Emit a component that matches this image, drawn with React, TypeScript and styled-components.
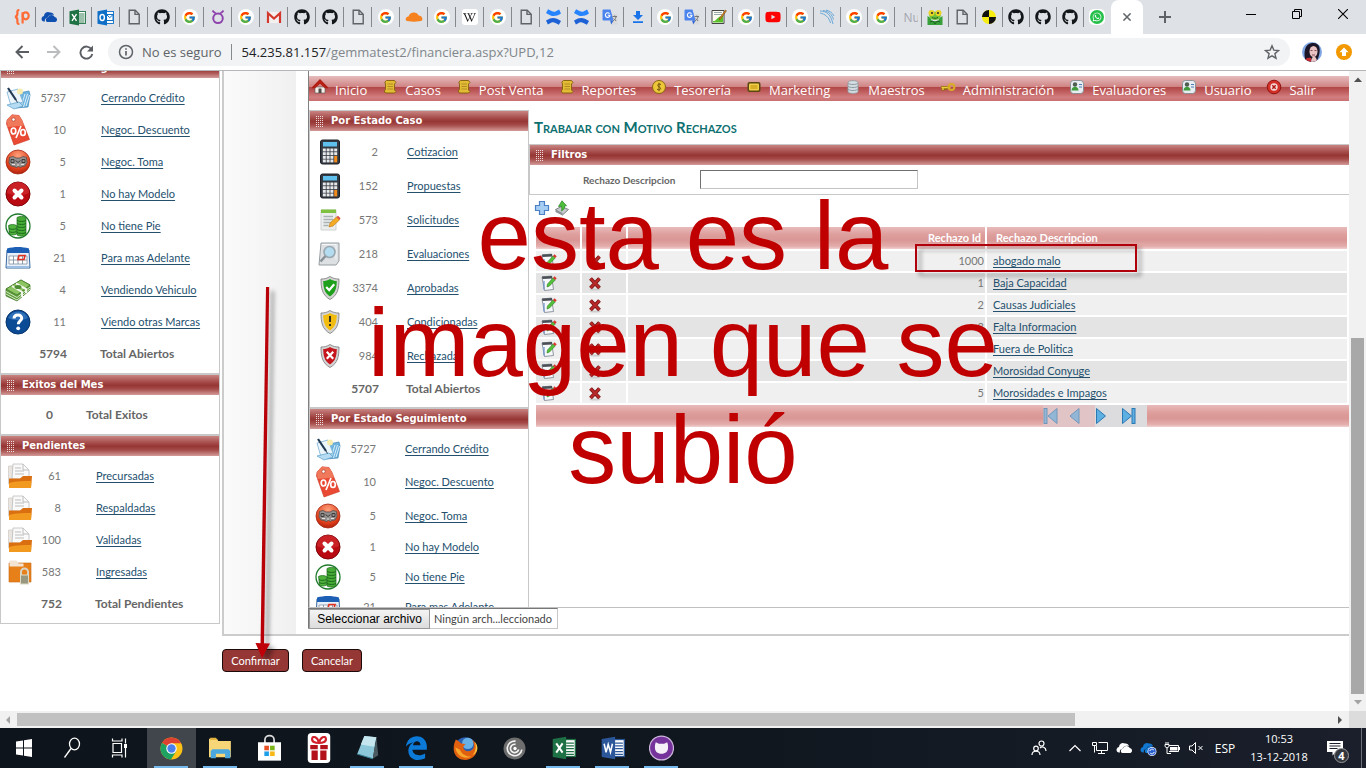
import React from "react";
import styled, { createGlobalStyle, css } from "styled-components";
import { FaGithub, FaWikipediaW, FaWhatsapp, FaYoutube } from "react-icons/fa";
import { FcGoogle } from "react-icons/fc";

const GlobalStyle = createGlobalStyle`
  *, *::before, *::after { box-sizing: border-box; }
  body { margin: 0; background: #fff; font-family: Lato, "Liberation Sans", sans-serif; font-size: 12px; color: #666; }
  button, input { font: inherit; }
  ul { list-style: none; margin: 0; padding: 0; }
  svg { display: block; flex: none; }
`;

const sans = `"Open Sans", "Noto Sans", sans-serif`;

/* ---------- small icons ---------- */

const DocIcon = () => (
  <svg width="16" height="16" viewBox="0 0 16 16" fill="none" stroke="#5f6368" strokeWidth="1.4">
    <path d="M3.2 1.2h6l4 4v9.6h-10z" />
    <path d="M9 1.4v4h4" />
  </svg>
);
const CurlyP = () => (
  <svg width="16" height="16" viewBox="0 0 16 16" fill="none" stroke="#ff6c37" strokeWidth="2.200">
    <path d="M5.4 1C3 1 3.4 2.6 3.4 4.6S3 7.6 1 7.9c2 .3 2.400 1.300 2.400 3.400S3 15 5.400 15" />
    <path d="M8.600 14.500V3.200" />
    <ellipse cx="11.700" cy="6.800" rx="3" ry="3.500" />
  </svg>
);
const OneDrive = ({ color = "#0f4fb0", badge = false }: { color?: string; badge?: boolean }) => (
  <svg width="17" height="16" viewBox="0 0 17 16">
    <path fill={color} d="M1 11.500a3 3 0 0 1 2-4.500 4 4 0 0 1 6-3.500 3.500 3.500 0 0 1 4 2.500c-4-1-6 1-6.500 3-2.500 0-3 2-2.500 3.500-1.500 0-2.500-.3-3-1z" />
    <path fill={color} d="M6 13a2.300 2.300 0 0 1 .8-4.300A3.800 3.800 0 0 1 13.800 8a2.600 2.600 0 0 1 .6 5z" />
    {badge && (
      <>
        <circle cx="12" cy="11.500" r="4.500" fill="#e8eefc" />
        <circle cx="12" cy="11.500" r="3.700" fill="#2a5fd0" />
        <path d="M9.800 11a2.300 2.300 0 0 1 4-1M14.200 12a2.300 2.300 0 0 1-4 1" stroke="#fff" fill="none" />
      </>
    )}
  </svg>
);
const OfficeIcon = ({ color, letter, size = 17 }: { color: string; letter: "X" | "W" | "O"; size?: number }) => (
  <svg width={size} height={size} viewBox="0 0 17 17">
    <rect x="8" y="2.500" width="8.500" height="12" fill="#fff" stroke={color} strokeWidth=".9" />
    {letter === "O" ? (
      <path d="M9.500 5.500h6.500v6H9.500l0-6 3.300 3.200L16 5.500" fill="none" stroke={color} />
    ) : (
      <path d="M10 5h5.500M10 7h5.500M10 9h5.500M10 11h5.500M10 13h5.500" stroke={color} strokeWidth=".9" />
    )}
    <path d="M.5 2.200 10 .5v16L.5 14.800z" fill={color} />
    <g fill="none" stroke="#fff" strokeWidth="1.400">
      {letter === "X" && <path d="m3 5.200 4.500 6.600M7.500 5.200 3 11.800" />}
      {letter === "W" && <path d="m2.200 5.500 1.400 6 1.500-5.500 1.600 5.500 1.400-6" strokeWidth="1.100" />}
      {letter === "O" && <ellipse cx="5.200" cy="8.500" rx="2.200" ry="3" />}
    </g>
  </svg>
);
const RingHorns = () => (
  <svg width="16" height="16" viewBox="0 0 16 16" fill="none" stroke="#8e44ad" strokeWidth="2">
    <circle cx="8" cy="9.300" r="4.800" />
    <path d="M2.500 1.500c1 1.800 2 2.200 3.500 3M13.500 1.500c-1 1.800-2 2.200-3.500 3" strokeWidth="1.700" />
  </svg>
);
const Gmail = () => (
  <svg width="16" height="16" viewBox="0 0 16 16">
    <rect x="1" y="3" width="14" height="11" fill="#f4f0ef" />
    <path d="M2 14V4.200l6 5.300 6-5.300V14" fill="none" stroke="#d3382c" strokeWidth="2.200" />
  </svg>
);
const Cloudflare = () => (
  <svg width="18" height="16" viewBox="0 0 18 16">
    <path fill="#f6821f" d="M1 11.500a2.800 2.800 0 0 1 2.500-4A5.500 5.500 0 0 1 13.700 6.500a3.500 3.500 0 0 1 3.300 5c-2 1.500-14 1.500-16 0z" />
  </svg>
);
const Confluence = () => (
  <svg width="17" height="16" viewBox="0 0 16 16">
    <path fill="#2684ff" d="M.5 4 2.600.3C6 2 7.500 3.200 9.500 2.700L13.600.6l1.900 4C9 8.500 6 7.500.5 4z" />
    <path fill="#1c62d6" d="m15.500 12-2.100 3.700c-3.400-1.700-4.900-2.900-6.900-2.400l-4.100 2.100-1.900-4C7 7.500 10 8.500 15.500 12z" />
  </svg>
);
const Translate = () => (
  <svg width="16" height="16" viewBox="0 0 16 16">
    <path fill="#d9dadc" d="M7 5h8.500v10.500H9.500z" />
    <path fill="#4c84ee" d="M1.500.5h7l3 11h-10a1 1 0 0 1-1-1v-9a1 1 0 0 1 1-1z" />
    <path fill="#3367d6" d="M8 11.500h3.500L9.300 15.500z" />
    <path d="M7.500 4.600A2.300 2.300 0 1 0 8 6.200H5.800" fill="none" stroke="#fff" strokeWidth="1.100" />
    <path d="M10.500 7.500h4.500M12.700 6.500v1M14 8c-.5 2-1.500 3-3 4M11.700 9.500l2.500 2.500" stroke="#777" fill="none" />
  </svg>
);
const Download = () => (
  <svg width="16" height="16" viewBox="0 0 16 16" fill="#1a73e8">
    <path d="M6 2h4v4h3l-5 5-5-5h3zM3 12.300h10v1.700H3z" />
  </svg>
);
const NoteChart = () => (
  <svg width="16" height="16" viewBox="0 0 16 16">
    <path d="M1 1.500h12v13H1z" fill="#fdfdf3" stroke="#444" />
    <path d="M2 12c3 1 5-6 10-5v6.500H2z" fill="#5cc02c" />
    <path d="M3 3.500h8M3 5.500h8" stroke="#9aa" />
    <path d="m8 10 6.500-9 1 .8L9 10.700z" fill="#e08a1c" stroke="#6b3b00" strokeWidth=".5" />
  </svg>
);
const Fan = () => (
  <svg width="16" height="16" viewBox="0 0 16 16" fill="none" stroke="#6aa8d8" strokeWidth="1">
    <path d="M1 2c7 0 11 4 13 13M4 1.500c6 1 9 4 10.500 9M7 1c4 1 6.500 3 8 6M1 4c5 1 9 4 10.500 10" />
  </svg>
);
const Frog = () => (
  <svg width="16" height="16" viewBox="0 0 16 16">
    <path fill="#37a03a" d="M.5 7l3 2 1.500 3h6l1.500-3 3-2v9H.5z" />
    <path fill="#6fc23a" d="M2 5c0-3 12-3 12 0s-2 6-6 6-6-3-6-6z" />
    <circle cx="4.500" cy="4" r="3" fill="#e9d423" />
    <circle cx="11.500" cy="4" r="3" fill="#e9d423" />
    <circle cx="5" cy="4" r="1.100" fill="#333" />
    <circle cx="11" cy="4" r="1.100" fill="#333" />
    <path d="M5 8.500c2 1 4 1 6 0M3 13l3-1 2 3 2-3 3 1" stroke="#1f5e20" fill="none" />
  </svg>
);
const QuarterDisc = () => (
  <svg width="16" height="16" viewBox="0 0 16 16">
    <circle cx="8" cy="8" r="7" fill="#f6ee12" />
    <path d="M8 8V1a7 7 0 0 0-7 7zM8 8v7a7 7 0 0 0 7-7z" fill="#111" />
  </svg>
);

/* ---------- application icons ---------- */

const PenPapers = () => (
  <svg width="26" height="26" viewBox="0 0 26 26">
    <path d="m9 9 15-3 1 4-2 12-12 1z" fill="#6fb4de" stroke="#3f86b8" strokeWidth=".7" />
    <path d="M20 9l-4 13M22.500 9l-4 13M24.500 10 21 21" stroke="#d9eefa" />
    <path d="m2 7 11-3 5 13-12 4z" fill="#eaf5fc" stroke="#79afd4" strokeWidth=".8" />
    <path d="m2 20 12-3 4 4-9 3z" fill="#b5dcf2" stroke="#5b9fcc" strokeWidth=".7" />
    <circle cx="15" cy="6.500" r="3" fill="#f6ecae" />
    <path d="m3 3 8 12" stroke="#223a52" strokeWidth="2.200" />
    <path d="m11 15 1.500 2.500" stroke="#223a52" />
  </svg>
);
const PriceTag = () => (
  <svg width="26" height="32" viewBox="0 0 26 32">
    <path d="M2 6 7 .8l7 .7 3 5 7.500 19L9 31 1.500 10z" fill="#ea4a33" stroke="#c8331f" strokeWidth=".6" />
    <path d="M2 6 7 .8l7 .7 3 5 2 5L2.500 13z" fill="#f28465" opacity=".8" />
    <circle cx="8.500" cy="5.500" r="1.700" fill="#fff" stroke="#9e2a1a" strokeWidth=".6" />
    <g fill="none" stroke="#fff" strokeWidth="1.700">
      <ellipse cx="8.500" cy="17" rx="2.300" ry="3" />
      <ellipse cx="18" cy="18.500" rx="2.300" ry="3" />
      <path d="m16 12-5 12" />
    </g>
  </svg>
);
const SwapBall = () => (
  <svg width="26" height="26" viewBox="0 0 26 26">
    <defs>
      <radialGradient id="ball" cx=".5" cy=".25" r=".8">
        <stop offset="0" stopColor="#ffa27c" />
        <stop offset=".7" stopColor="#dd3c18" />
        <stop offset="1" stopColor="#9c1c0c" />
      </radialGradient>
    </defs>
    <circle cx="13" cy="13" r="12" fill="url(#ball)" stroke="#a52a17" strokeWidth=".8" />
    <path d="M4.500 8.500 8 7.500l3 1.500h4l3-1.500 3.500 1 .5 5-2 3.500-3 .5-1.500 1-2-1-2 1-2.500-1-3-.5L4 14z" fill="#93908f" stroke="#4c4645" strokeWidth=".7" />
    <path d="M6 10.500h3v3H6zM17 10.500h3v3h-3zM10.500 11.500l2.500 2 2.500-2" stroke="#403c3b" fill="none" />
    <path d="M7 15.500h3M16 15.500h3M12 16h2" stroke="#e4e1df" fill="none" />
  </svg>
);
const RedCross = () => (
  <svg width="26" height="26" viewBox="0 0 26 26">
    <circle cx="13" cy="13" r="12" fill="#b80a10" stroke="#7e0508" />
    <path d="M2 12a11 11 0 0 1 22 0c-6 3-16 3-22 0z" fill="#d8353a" opacity=".55" />
    <path d="m9.500 9.500 7 7M16.500 9.500l-7 7" stroke="#fff" strokeWidth="4" strokeLinecap="round" />
  </svg>
);
const CoinStacks = () => (
  <svg width="26" height="26" viewBox="0 0 26 26">
    <circle cx="13" cy="13" r="12" fill="#fff" stroke="#1f7a2c" strokeWidth="1.300" />
    <path d="M12 4.500c2-1.500 7-1.500 9 0V22c-2 1.500-7 1.500-9 0z" fill="#45ab35" stroke="#1c6b1c" strokeWidth=".7" />
    <path d="M3.500 12.500c2-1.300 6-1.300 8 0v8.500c-2 1.300-5 1.300-7 0z" fill="#4fb33d" stroke="#1c6b1c" strokeWidth=".7" />
    <path d="M12 7.500c2 1.300 7 1.300 9 0M12 10.500c2 1.300 7 1.300 9 0M12 13.500c2 1.300 7 1.300 9 0M12 16.500c2 1.300 7 1.300 9 0M12 19.500c2 1.300 7 1.300 9 0M4 15.500c2 1.200 5 1.200 7.500 0M4 18.500c2 1.200 5 1.200 7.500 0" stroke="#1c6b1c" fill="none" />
  </svg>
);
const CalendarIcon = () => (
  <svg width="26" height="26" viewBox="0 0 26 26">
    <path d="M2 5h22l1 18H1z" fill="#e8f1fa" stroke="#39679c" />
    <path d="M2 3.500c7-2 15-2 22 0V8H2z" fill="#1d5fb4" />
    <path d="M4 11h18v8H4z" fill="#fff" stroke="#8593a3" strokeWidth=".8" />
    <path d="M4 15h18M8.500 11v8M13 11v8M17.500 11v8" stroke="#8593a3" strokeWidth=".9" />
    <path d="M14 10.500h6l-1 4h-6z" fill="none" stroke="#e03020" strokeWidth="1.600" />
    <path d="M2 22h22" stroke="#9dbfe2" strokeWidth="2" />
  </svg>
);
const CashIcon = () => (
  <svg width="26" height="26" viewBox="0 0 26 26">
    <path d="m1 12 15-9 9 5v5l-13 11L1 19z" fill="#5e9c3c" stroke="#3d7426" strokeWidth=".7" />
    <path d="m1 12 15-9 9 5-13 10z" fill="#8cc461" stroke="#3d7426" strokeWidth=".7" />
    <path d="m1 14.500 11 6 13-10.500M1 17l11 6 13-11" stroke="#d5e9c3" fill="none" />
    <path d="m7 9 10 6 0 5M11 6.500l10 5.500v4" stroke="#f2f6ec" strokeWidth="2" fill="none" />
    <ellipse cx="13" cy="10" rx="3.500" ry="2" fill="#4e8c33" />
  </svg>
);
const HelpIcon = () => (
  <svg width="26" height="26" viewBox="0 0 26 26">
    <circle cx="13" cy="13" r="12" fill="#0b4a94" stroke="#08356d" />
    <path d="M3 9a11 11 0 0 1 20 0c-6 3-14 3-20 0z" fill="#3b7fc6" opacity=".7" />
    <path d="M9 9.500c.3-5 8-4.500 7.700-.2-.2 2.700-3.400 2.700-3.400 6" stroke="#fff" strokeWidth="3" fill="none" />
    <circle cx="13.200" cy="19.300" r="1.900" fill="#fff" />
  </svg>
);
const FolderIcon = ({ locked = false }: { locked?: boolean }) => (
  <svg width="26" height="26" viewBox="0 0 26 26">
    {locked ? (
      <>
        <path d="M2 4h22v19H2z" fill="#e8801a" stroke="#c9650d" strokeWidth=".6" />
        <path d="M2.500 1.500h7l2 3h5v3h-14z" fill="#f3e3d3" />
        <path d="M14 17v-4a3.500 3.500 0 0 1 7 0v4" fill="none" stroke="#d9d3c6" strokeWidth="2" />
        <rect x="13.500" y="16" width="8" height="9" fill="#97987f" stroke="#dedac6" />
      </>
    ) : (
      <>
        <path d="M1.500 3H6v18H1.500z" fill="#e9e5e1" stroke="#cfc8c1" strokeWidth=".7" />
        <path d="M6 1h10l6 6v9H5z" fill="#fafafa" stroke="#bdbdbd" strokeWidth=".8" />
        <path d="M16 1v6h6M8 5h6M8 8h9M8 11h9" stroke="#bdbdbd" fill="none" />
        <path d="M2 15.500h11l3-2.500h9l-1 12H2z" fill="#d96f10" />
        <path d="M2 20c7-2 15-2 22.300-2l-.3 7H2z" fill="#f19a1f" />
      </>
    )}
  </svg>
);
const Calculator = () => (
  <svg width="22" height="26" viewBox="0 0 22 26">
    <rect x="1.500" y="1" width="19" height="24" rx="2" fill="#343a42" stroke="#1d2127" />
    <rect x="4" y="3" width="14" height="4.500" fill="#5fc0ee" />
    <g fill="#e6e8ea">
      {[9.5, 13.2, 16.9, 20.5].map((y) =>
        [3.8, 7.6, 11.4].map((x) => <rect key={`${x}-${y}`} x={x} y={y} width="3" height="2.900" />)
      )}
      <rect x="15.200" y="9.500" width="3" height="2.900" />
      <rect x="15.200" y="13.200" width="3" height="2.900" />
    </g>
    <rect x="15.200" y="16.900" width="3" height="6.500" fill="#f38b1c" />
  </svg>
);
const NotePencil = () => (
  <svg width="22" height="24" viewBox="0 0 22 24">
    <path d="M2 2h15v20H2z" fill="#eceeee" stroke="#cfd3d3" />
    <path d="M2 1.500h15v3.500H2z" fill="#7fc242" />
    <path d="M4.500 8.500H14M4.500 11.500H14M4.500 14.500h7M4.500 17.500h5" stroke="#a9b2b2" strokeWidth="1.300" />
    <path d="m10 19 1-4 6.500-6 3 3-6.500 6z" fill="#f4ab25" stroke="#b87412" strokeWidth=".6" />
    <path d="m17.500 9 1.500-1.300 2.500 2.500-1 1.800z" fill="#dd4a44" />
  </svg>
);
const MagnifierBox = () => (
  <svg width="24" height="24" viewBox="0 0 24 24">
    <path d="M4 1h18v18l-3 4H2z" fill="#dde0e2" stroke="#979da1" />
    <path d="M5 2.500h14v15" fill="none" stroke="#f5f6f7" />
    <circle cx="12.500" cy="10" r="5.500" fill="#b4dcf0" stroke="#9aa8b1" strokeWidth="1.600" />
    <path d="m8.500 14-5 5.500" stroke="#8a9299" strokeWidth="2.600" />
  </svg>
);
const Shield = ({ color, mark }: { color: string; mark: "check" | "bang" | "cross" }) => (
  <svg width="22" height="26" viewBox="0 0 22 26">
    <path d="M11 1.500c3 2 6 2.500 9 2.500 0 9-1 16-9 20.500C3 20 2 13 2 4c3 0 6-.5 9-2.500z" fill="#d4d4d4" stroke="#777" strokeWidth=".8" />
    <path d="M11 4c2.500 1.500 4.500 2 6.800 2-.2 7-1.300 12-6.800 15.500C5.500 18 4.400 13 4.200 6 6.500 6 8.500 5.500 11 4z" fill={color} />
    <g stroke={mark === "bang" ? "#222" : "#fff"} strokeWidth="2.200" fill="none">
      {mark === "check" && <path d="m7.200 12 3 3.200 5-6" />}
      {mark === "bang" && <path d="M11 7v6M11 15v2" strokeWidth="1.800" />}
      {mark === "cross" && <path d="m7.800 8.800 6.400 7M14.200 8.800l-6.400 7" />}
    </g>
  </svg>
);
const EditIcon = () => (
  <svg width="16" height="16" viewBox="0 0 16 16">
    <path d="m1 2 9.500-1 2 13.500-9 1z" fill="#f5f7fa" stroke="#77808c" strokeWidth=".8" />
    <path d="M1 1.500 11 1l.4 2.500L1.500 4z" fill="#4a4f56" />
    <path d="M3 6v8.500" stroke="#6b93cf" strokeWidth="1.200" />
    <path d="m6 12 .5-3L12 3l2.200 2-5.700 6z" fill="#54c13a" stroke="#2a7d1b" strokeWidth=".6" />
    <path d="m12 3 1.500-1.800 2.200 2L14.200 5z" fill="#d8382d" />
  </svg>
);
const DeleteIcon = () => (
  <svg width="16" height="16" viewBox="0 0 16 16">
    <ellipse cx="8" cy="14.500" rx="5.500" ry="1" fill="#ccc" />
    <path d="m3.500 3.500 9 9.500M12.500 3.500l-9 9.500" stroke="#7d1414" strokeWidth="3.800" />
    <path d="m3.500 3.500 9 9.500M12.500 3.500l-9 9.500" stroke="#b82a2a" strokeWidth="2" />
  </svg>
);
const PlusIcon = () => (
  <svg width="16" height="16" viewBox="0 0 16 16">
    <path d="M5.500 1.500h5v4h4v5h-4v4h-5v-4h-4v-5h4z" fill="#a6cdf2" stroke="#4a7fc4" strokeWidth="1.200" />
  </svg>
);
const ExportIcon = () => (
  <svg width="16" height="16" viewBox="0 0 16 16">
    <path d="m1.500 9.500 6-3 7 3-6 5.500z" fill="#c5c9cc" stroke="#666c70" strokeWidth=".8" />
    <path d="m1.500 9.500 7 3.500v2.500l-7-3.500z" fill="#8b9195" />
    <path d="m8 .8 4.500 5h-2c.5 2-.5 4-3 5 .5-2 .3-3.500 0-4.500L4.500 6.500z" fill="#4fbf3c" stroke="#21801a" strokeWidth=".7" />
  </svg>
);

/* ---------- menu icons ---------- */

const MenuGlyph = ({ kind }: { kind: string }) => (
  <svg width="16" height="16" viewBox="0 0 16 16">
    {kind === "home" && (
      <>
        <path d="M3 8h10v6H3z" fill="#f6f0e8" stroke="#555" strokeWidth=".6" />
        <path d="M8 1 .8 8.500h2L8 3.800l5.200 4.700h2z" fill="#d92a1c" stroke="#b01d12" strokeWidth="1.400" />
        <path d="M6.500 9.500h3V14h-3z" fill="#4c4a48" />
      </>
    )}
    {kind === "scroll" && (
      <>
        <path d="M4.500 1.500h8l1.500 2-1.500 1.500v6l1.500 1.500-1.500 1.500h-9l-1.300-2L3.500 10.500V5L2.800 3z" fill="#e3bb34" stroke="#80600c" strokeWidth=".9" />
        <path d="M5.500 5h5.500M5.500 7.500h5.500M5.500 10h5.500" stroke="#b08c22" />
      </>
    )}
    {kind === "coin" && (
      <>
        <circle cx="8" cy="8" r="6.500" fill="#edc63a" stroke="#876712" />
        <path d="M10 5.500c-3-1.500-4.500 1-2 2.300 3 1.200 1.500 4-2 2.500M8 3.800v8.400" stroke="#70540d" fill="none" />
      </>
    )}
    {kind === "screen" && (
      <>
        <rect x="1.500" y="3" width="13" height="10" rx="2" fill="#5c4710" />
        <rect x="3" y="4.500" width="10" height="7" rx="1" fill="#f0cf4a" />
        <rect x="4.500" y="6" width="7" height="4" fill="#d8ae25" />
      </>
    )}
    {kind === "db" && (
      <>
        <path d="M3 3.500c0-2.500 10-2.500 10 0v9c0 2.500-10 2.500-10 0z" fill="#d3dce1" stroke="#8e9aa1" strokeWidth=".8" />
        <path d="M3 4c1 2 9 2 10 0M3 7c1 2 9 2 10 0M3 10c1 2 9 2 10 0" stroke="#8e9aa1" fill="none" />
      </>
    )}
    {kind === "key" && (
      <>
        <path d="M1 8.500h9M3 8.500v3M5.500 8.500v2.500" stroke="#8c6a10" strokeWidth="3" />
        <path d="M1.500 8.500h9M3 8.500V11" stroke="#efc93f" strokeWidth="1.400" />
        <circle cx="11.500" cy="8" r="2.900" fill="none" stroke="#d9ac26" strokeWidth="2" />
      </>
    )}
    {kind === "user" && (
      <>
        <rect x="1.500" y="1.500" width="13" height="13" rx="3" fill="#e7edf0" stroke="#77858c" strokeWidth=".8" />
        <circle cx="6" cy="5.500" r="2.200" fill="#4e5f52" />
        <path d="M2.500 11.500c0-5 7-5 7 0z" fill="#3e9b3a" />
        <path d="M10 5.500h3M10 8h3" stroke="#4a7db5" />
      </>
    )}
    {kind === "exit" && (
      <>
        <circle cx="8" cy="8" r="6.800" fill="#d4302a" stroke="#8e1410" />
        <circle cx="8" cy="8" r="3.700" fill="#f4d9d6" />
        <path d="m6.300 6.300 3.400 3.400M9.700 6.300 6.300 9.700" stroke="#b01712" strokeWidth="1.400" />
      </>
    )}
  </svg>
);

/* ---------- browser chrome ---------- */

const Screen = styled.div`
  position: relative;
  display: flex;
  flex-direction: column;
  min-height: 100vh;
  overflow: hidden;
`;
const TabStrip = styled.div`
  display: flex;
  height: 34px;
  padding-left: 8px;
  background: #dee1e6;
`;
const Tab = styled.div<{ $narrow?: boolean }>`
  flex: none;
  display: flex;
  align-items: center;
  justify-content: center;
  width: ${(p) => (p.$narrow ? 27 : 28)}px;
  height: 20px;
  margin-top: 7px;
  border-right: 1px solid #85888c;
  overflow: hidden;
  &:nth-child(40) { border-right-color: transparent; }
`;
const Disc = styled.span<{ $square?: boolean }>`
  display: flex;
  align-items: center;
  justify-content: center;
  width: 16px;
  height: 16px;
  border-radius: ${(p) => (p.$square ? 3 : 8)}px;
  background: #fff;
`;
const TabText = styled.span`
  font: 12px ${sans};
  color: #a3a5b0;
  padding-left: 5px;
  width: 19px;
  overflow: hidden;
`;
const ActiveTab = styled.div`
  display: flex;
  align-items: center;
  justify-content: center;
  width: 32px;
  border-radius: 8px 8px 0 0;
  background: #fff;
`;
const ChromeButton = styled.button<{ $w: number }>`
  display: flex;
  align-items: center;
  justify-content: center;
  width: ${(p) => p.$w}px;
  padding: 0;
  border: 0;
  background: none;
`;
const WindowControls = styled.div`
  display: flex;
  margin-left: auto;
  padding-bottom: 6px;
`;
const AddressRow = styled.div`
  display: flex;
  align-items: center;
  height: 37px;
  padding: 0 12px 0 4px;
  border-bottom: 1px solid #b6b6b8;
  background: #fff;
`;
const Omnibox = styled.div`
  flex: 1;
  display: flex;
  align-items: center;
  height: 28px;
  margin-left: 4px;
  padding: 0 10px;
  border-radius: 14px;
  background: #f1f3f4;
  font: 13px/28px ${sans};
  color: #80868b;
`;
const Insecure = styled.span`
  margin-left: 8px;
  padding-right: 9px;
  line-height: 16px;
  border-right: 1px solid #85888c;
  color: #5f6368;
`;
const Url = styled.span`
  flex: 1;
  margin-left: 10px;
  b { font-weight: 400; color: #202124; }
`;

const G = () => <Disc><FcGoogle size={13} /></Disc>;
const Gh = () => <FaGithub size={16} color="#14171a" />;

const tabIcons: React.ReactNode[] = [
  <CurlyP />, <OneDrive />, <OfficeIcon color="#1f7244" letter="X" />, <OfficeIcon color="#0f6fc6" letter="O" />,
  <DocIcon />, <Gh />, <G />, <RingHorns />, <G />, <Gmail />, <Gh />, <Gh />, <DocIcon />, <G />, <Cloudflare />,
  <G />, <Disc $square><FaWikipediaW size={13} color="#111" /></Disc>, <G />, <DocIcon />, <Confluence />,
  <Confluence />, <Translate />, <Download />, <G />, <Translate />, <NoteChart />, <G />,
  <FaYoutube size={16} color="#f00" />, <G />, <Fan />, <G />, <G />, <TabText>Nu</TabText>, <Frog />, <DocIcon />,
  <QuarterDisc />, <Gh />, <Gh />, <Gh />,
  <svg width="16" height="16" viewBox="0 0 16 16"><rect width="16" height="16" rx="5" fill="#fff" /><circle cx="8" cy="8" r="7" fill="#25c04a" /><g transform="translate(3 3)"><FaWhatsapp size={10} color="#fff" /></g></svg>,
];

/* ---------- page ---------- */

const Body = styled.div`
  flex: 1;
  display: flex;
  min-height: 0;
`;
const Page = styled.main`
  flex: 1;
  display: flex;
  align-items: flex-start;
  min-width: 0;
  height: 640px;
  overflow: hidden;
`;
const Sidebar = styled.aside<{ $scrolled?: boolean }>`
  flex: none;
  width: 220px;
  margin-top: ${(p) => (p.$scrolled ? "-14px" : "0")};
`;
const Panel = styled.section`
  border: 1px solid #c8c8c8;
`;
const PanelHead = styled.h2`
  display: flex;
  align-items: center;
  height: 20px;
  margin: 0;
  padding: 0 0 1px 5px;
  font: bold 10px/18px "DejaVu Sans", sans-serif;
  color: #fff;
  background: linear-gradient(#c98482, #a04442 40%, #963634 52%, #a54b49 70%, #d39b99);
  &::before {
    content: "";
    width: 8px;
    height: 12px;
    margin: 2px 8px 0 0;
    background: conic-gradient(#fff 25%, transparent 0) 0 0 / 2px 2px;
    opacity: 0.8;
  }
`;
const StatList = styled.ul`
  padding: 4px 0 3px;
`;
const StatRow = styled.li<{ $h: number; $icon: number; $num: number; $text: number; $total?: boolean }>`
  display: grid;
  align-items: center;
  grid-template-columns: ${(p) => p.$icon}px ${(p) => p.$num - p.$icon}px 1fr;
  height: ${(p) => p.$h}px;
  line-height: 16px;
  > :first-child { justify-self: end; }
  > :nth-child(2) { text-align: right; font-size: ${(p) => (p.$total ? 12 : 11)}px; color: ${(p) => (p.$total ? "#666" : "#777")}; }
  > :last-child { padding-left: ${(p) => p.$text - p.$num}px; }
  ${(p) => p.$total && css`font-weight: bold; color: #666;`}
`;
const Link = styled.a`
  font-size: 11px;
  color: #24506e;
  text-decoration: underline;
  text-underline-offset: 2px;
`;

type Stat = [React.ReactNode, string, string, number?];
interface StatsProps {
  title: string;
  rows: Stat[];
  total?: [string, string];
  icon: number;
  num: number;
  text: number;
  h?: number;
  totalH?: number;
}
const StatsPanel = ({ title, rows, total, icon, num, text, h = 32, totalH = 32 }: StatsProps) => (
  <Panel>
    <PanelHead>{title}</PanelHead>
    <StatList>
      {rows.map(([ic, n, label, rh]) => (
        <StatRow key={label} $h={rh ?? h} $icon={icon} $num={num} $text={text}>
          <span>{ic}</span>
          <span>{n}</span>
          <span><Link href="#">{label}</Link></span>
        </StatRow>
      ))}
      {total && (
        <StatRow $total $h={totalH} $icon={icon} $num={num + 1} $text={text - 1}>
          <span />
          <span>{total[0]}</span>
          <span>{total[1]}</span>
        </StatRow>
      )}
    </StatList>
  </Panel>
);

const Center = styled.div`
  flex: 1;
  min-width: 0;
  margin-left: 2px;
`;
const FormArea = styled.div`
  display: flex;
  border-left: 2px solid #ccc;
  border-bottom: 2px solid #ccc;
`;
const LabelBand = styled.div`
  flex: none;
  width: 72px;
  margin-right: 12px;
  background: linear-gradient(to right, #fbfbfb, #f0f0f0);
`;
const FormField = styled.div`
  flex: 1;
  min-width: 0;
  padding-bottom: 5px;
`;
const Frame = styled.div`
  height: 537px;
  padding-top: 5px;
  overflow: hidden;
  border-left: 1px solid #808080;
  border-bottom: 1px solid #c0c0c0;
`;
const MenuBar = styled.nav`
  display: flex;
  height: 25px;
  padding-left: 3px;
  background: linear-gradient(#e6bcbc, #cf8282 44%, #b24848 46%, #bf5c5c 62%, #d27e80 84%, #c97072);
`;
const MenuItem = styled.a`
  display: flex;
  margin-right: 15px;
  gap: 7px;
  font: 13px/28px ${sans};
  color: #fff;
  text-decoration: none;
  white-space: nowrap;
  svg { margin-top: 3px; }
`;
const FrameBody = styled.div`
  display: flex;
  padding-top: 9px;
`;
const Work = styled.div`
  flex: 1;
  min-width: 0;
`;
const Title = styled.h1`
  margin: 0;
  padding: 8px 0;
  padding-left: 5px;
  font: bold 15px/18px Lato, sans-serif;
  font-variant: small-caps;
  color: #0d7070;
`;
const FilterPanel = styled.section`
  border: 1px solid #c8c8c8;
  border-right: 0;
`;
const FilterRow = styled.div`
  display: flex;
  align-items: center;
  height: 29px;
  padding-left: 53px;
  label { width: 117px; font-weight: bold; font-size: 10px; }
  input {
    width: 218px;
    height: 19px;
    border: 1px solid #c4c4c4;
    border-top-color: #707070;
    border-left-color: #707070;
    background: #fff;
  }
`;
const Tools = styled.div`
  display: flex;
  gap: 4px;
  padding: 5px 0 9px 5px;
`;
const ToolButton = styled.button`
  padding: 0;
  border: 0;
  background: none;
`;
const roseBar = "linear-gradient(#e8baba, #dd9e9c 35%, #d99694 60%, #e4aeac 88%, #f0d2d2)";
const Grid = styled.table`
  width: calc(100% - 5px);
  margin-left: 5px;
  table-layout: fixed;
  border-collapse: separate;
  border-spacing: 2px;
  th, td { height: 20px; padding: 0; line-height: 18px; }
  th { height: 22px; font-size: 11px; color: #fff; text-align: left; background: ${roseBar}; }
  td svg { margin: 0 0 0 5px; }
  tbody tr:nth-child(odd) td { background: #f0f0f0; }
  tbody tr:nth-child(even) td { background: #e4e4e4; }
  th:nth-child(3) { text-align: right; padding-right: 4px; }
  td:nth-child(3) { text-align: right; font-size: 11px; color: #777; padding-right: 1px; }
  th:nth-child(4) { padding-left: 9px; }
  td:nth-child(4) { padding-left: 6px; }
`;
const Pager = styled.div`
  display: flex;
  height: 22px;
  margin-left: 7px;
  padding-left: 507px;
  background: ${roseBar};
`;
const PagerGroup = styled.div<{ $off?: boolean }>`
  display: flex;
  width: 52px;
  background: ${(p) => (p.$off ? "#e0c4c6" : "#dcdcde")};
`;
const PagerButton = styled.button`
  width: 26px;
  padding: 0;
  border: 0;
  background: none;
`;
const FilePicker = styled.label`
  display: inline-flex;
  align-items: center;
  height: 21px;
  width: 250px;
  border: 1px solid #c8c8c8;
  border-left-color: #777;
  border-top-color: #777;
  color: #444;
  font-size: 11px;
  white-space: nowrap;
  input { position: absolute; width: 1px; height: 1px; opacity: 0; }
`;
const FileButton = styled.span`
  flex: none;
  width: 121px;
  margin-right: 4px;
  font: 12px/18px "Liberation Sans", Arial, sans-serif;
  text-align: center;
  color: #000;
  border: 1px solid #999;
  background: linear-gradient(#f4f4f4, #dcdcdc);
`;
const Actions = styled.div`
  display: flex;
  gap: 13px;
  padding-top: 13px;
`;
const ActionButton = styled.button<{ $w: number }>`
  width: ${(p) => p.$w}px;
  height: 23px;
  padding: 0;
  border: 1px solid #1c0a0a;
  border-radius: 4px;
  background: #953735;
  color: #fff;
  font-size: 11px;
`;

/* ---------- scroll bars ---------- */

const VBar = styled.div`
  flex: none;
  display: flex;
  flex-direction: column;
  align-items: center;
  width: 17px;
  padding: 5px 0;
  background: #f1f1f1;
`;
const VThumb = styled.div`
  width: 13px;
  height: 356px;
  margin: auto 0 4px;
  background: #a8a8a8;
`;
const HBar = styled.div`
  display: flex;
  align-items: center;
  height: 17px;
  background: linear-gradient(to left, #dcdcdc 17px, #f1f1f1 17px);
  padding: 0 22px 0 5px;
`;
const HThumb = styled.div`
  width: 79%;
  height: 13px;
  margin: 0 auto 0 4px;
  background: #c1c1c1;
`;
const Caret = ({ d, color }: { d: string; color: string }) => (
  <svg width="8" height="8" viewBox="0 0 8 8" fill={color}><path d={d} /></svg>
);

/* ---------- annotations ---------- */

const BigNote = styled.p`
  position: absolute;
  top: 182px;
  left: 0;
  right: 0;
  margin: 0;
  font: 96px/107px "Liberation Sans", Arial, sans-serif;
  color: #c00000;
  text-align: center;
  pointer-events: none;
`;
const RedBox = styled.div`
  position: absolute;
  top: 244px;
  left: 915px;
  width: 222px;
  height: 28px;
  border: 2px solid #b0000c;
  filter: drop-shadow(4px 4px 2px rgba(0, 0, 0, 0.4));
`;
const Arrow = styled.svg`
  position: absolute;
  top: 284px;
  left: 252px;
  filter: drop-shadow(5px 4px 2px rgba(0, 0, 0, 0.35));
  pointer-events: none;
`;

/* ---------- taskbar ---------- */

const Taskbar = styled.footer`
  display: flex;
  height: 40px;
  background: linear-gradient(to right, #0d141b, #10171f 55%, #1a1f2b);
  color: #fff;
`;
const Apps = styled.div`
  flex: none;
  display: grid;
  grid-template-columns: repeat(11, 49px);
  margin-left: 3px;
`;
const TaskButton = styled.button<{ $open?: boolean; $active?: boolean }>`
  display: flex;
  align-items: center;
  justify-content: center;
  min-width: 48px;
  margin: 0;
  padding: 2px 0 0;
  border: solid transparent;
  border-width: 0 4px 2px;
  color: #fff;
  background: ${(p) => (p.$active ? "#40464c" : "none")};
  ${(p) => p.$open && css`border-image: linear-gradient(to right, transparent 4px, #76b9ed 4px, #76b9ed 44px, transparent 44px) 0 0 2 0;`}
`;
const Tray = styled.div`
  display: flex;
  align-items: center;
  margin-left: auto;
`;
const TrayIcon = styled.button<{ $w: number }>`
  display: flex;
  align-items: center;
  justify-content: center;
  width: ${(p) => p.$w}px;
  height: 40px;
  padding: 0;
  border: 0;
  background: none;
  color: #fff;
  font: 12px ${sans};
`;
const Clock = styled.time`
  width: 74px;
  text-align: center;
  font: 11px/18px ${sans};
`;
const Notices = styled.button`
  position: relative;
  width: 46px;
  height: 40px;
  margin-right: 4px;
  padding: 0 0 0 11px;
  border: 0;
  border-right: 1px solid #6b7079;
  background: none;
`;
const Count = styled.span`
  position: absolute;
  left: 18px;
  top: 20px;
  width: 15px;
  height: 15px;
  border: 1px solid #999;
  border-radius: 8px;
  background: #33373d;
  color: #fff;
  font: bold 11px/13px ${sans};
`;

const taskIcons: { name: string; open?: boolean; active?: boolean; icon: React.ReactNode }[] = [
  { name: "Chrome", open: true, active: true, icon: (
    <svg width="23" height="23" viewBox="0 0 22 22">
      <circle cx="11" cy="11" r="10.500" fill="#fbc116" />
      <path d="M11 11 2 5.500A10.500 10.500 0 0 0 10.500 21.500l5-8z" fill="#1da261" />
      <path d="M2 5.500 A10.500 10.500 0 0 1 20.300 6H11v5z" fill="#de4032" />
      <circle cx="11" cy="11" r="5" fill="#fff" /><circle cx="11" cy="11" r="4" fill="#4a80ee" />
    </svg>) },
  { name: "Explorador", open: true, icon: (
    <svg width="23" height="24" viewBox="0 0 20 20">
      <path d="M0 2h7l1 2h11v14H0z" fill="#f6d676" /><path d="M1 1h5l1 2H1z" fill="#e5b43f" />
      <path d="M1.500 19v-6.500l1.500-1.500h14l1.500 1.500V19H14v-4H6v4z" fill="#4aa8df" />
    </svg>) },
  { name: "Tienda", icon: (
    <svg width="23" height="28" viewBox="0 0 20 24">
      <path d="M6 8V5c0-5 8-5 8 0v3" fill="none" stroke="#ddd" strokeWidth="1.500" /><path d="M0 7h20v16H0z" fill="#fff" />
      <path d="M5.500 10H9.500v4H5.500z" fill="#e94f24" /><path d="M10.500 10h4v4h-4z" fill="#7cb518" /><path d="M5.500 15h4v4h-4z" fill="#1f9fe8" /><path d="M10.500 15h4v4h-4z" fill="#f7b715" />
    </svg>) },
  { name: "Regalo", icon: (
    <svg width="26" height="30" viewBox="0 0 20 24">
      <rect x="1" width="18" height="24" rx="3" fill="#fff" />
      <path d="M3 9.500h6v3.500H3zM11 9.500h6v3.500h-6zM4 14h5v7.500H4zM11 14h5v7.500h-5z" fill="#b3121d" />
      <path d="M10 8C7 8 4 7 4.500 4.500S9 3 10 8c1-5 5-6 5.500-3.500S13 8 10 8z" fill="none" stroke="#d0202c" strokeWidth="1.700" />
    </svg>) },
  { name: "Bloc de notas", open: true, icon: (
    <svg width="24" height="28" viewBox="0 0 20 22">
      <path d="m7 1 10 1-3 18L1 16z" fill="#8cc8da" /><path d="m7 1 10 1-2 8-11-2z" fill="#c5e6ee" /><path d="m17 2 1.500 15-4.500 3z" fill="#4b5a60" /><path d="m1 16 13 4" stroke="#3c7f96" />
    </svg>) },
  { name: "Edge", open: true, icon: (
    <svg width="23" height="26" viewBox="0 0 20 22">
      <path fill="#0b7ad8" d="M.8 10C2-2 18-2 19 9v3.500H6.500c.3 5 6.500 6 11 3.200V20C9 24 2 19.500 3 12c.5-3 2.500-5 4.500-6C4.500 6.500 2 8 .8 10zM7 8.500h6.500C13.500 4 7.500 4 7 8.500z" />
    </svg>) },
  { name: "Firefox", icon: (
    <svg width="25" height="25" viewBox="0 0 22 22">
      <circle cx="11" cy="10.500" r="9.500" fill="#2c5fb0" /><circle cx="13" cy="6.500" r="5" fill="#68b1e6" />
      <path d="M2.500 3C4 4 6 5 7 6.500l4 .5-2 2.500c0 5 7 5 9 1 1-3 0-6-1.500-7.500C20 5 22 9 21 13c-2 10-17 11-20 1C0 10 1 6 2.500 3z" fill="#e0600f" />
      <path d="M2 10c1 8 9 11 14 8-5 0-8-2-10-6z" fill="#f7a72c" />
      <path d="M19 5c2 4 1 9-2 12 5-2 6-8 2-12z" fill="#f9c640" />
    </svg>) },
  { name: "Captura", icon: (
    <svg width="23" height="23" viewBox="0 0 22 22" fill="none">
      <circle cx="11" cy="11" r="10.500" fill="#6e6e6e" /><path d="M18 12a7 7 0 1 1-6-8M15 12a4 4 0 1 1-3-5" stroke="#f3f3f3" strokeWidth="1.600" /><circle cx="11.500" cy="11" r="1.600" fill="#fff" />
    </svg>) },
  { name: "Excel", open: true, icon: <OfficeIcon color="#1e7145" letter="X" size={24} /> },
  { name: "Word", open: true, icon: <OfficeIcon color="#2b579a" letter="W" size={24} /> },
  { name: "GitHub Desktop", open: true, icon: (
    <svg width="25" height="28" viewBox="0 0 24 24">
      <circle cx="12" cy="12" r="11.500" fill="#75339b" stroke="#cdb6dc" strokeWidth="1.200" />
      <path d="M6.500 6.500 9.500 8h5l3-1.500c.7 2 .8 3 .8 5 0 4-2.500 6-6.300 6s-6.300-2-6.300-6c0-2 .1-3 .8-5z" fill="#f6f1f9" />
    </svg>) },
];

/* ---------- data ---------- */

const leftStats: Stat[] = [
  [<PenPapers />, "5737", "Cerrando Crédito"],
  [<PriceTag />, "10", "Negoc. Descuento"],
  [<SwapBall />, "5", "Negoc. Toma"],
  [<RedCross />, "1", "No hay Modelo"],
  [<CoinStacks />, "5", "No tiene Pie"],
  [<CalendarIcon />, "21", "Para mas Adelante"],
  [<CashIcon />, "4", "Vendiendo Vehiculo"],
  [<HelpIcon />, "11", "Viendo otras Marcas"],
];
const pending: Stat[] = [
  [<FolderIcon />, "61", "Precursadas"],
  [<FolderIcon />, "8", "Respaldadas"],
  [<FolderIcon />, "100", "Validadas"],
  [<FolderIcon locked />, "583", "Ingresadas"],
];
const caseStats: Stat[] = [
  [<Calculator />, "2", "Cotizacion"],
  [<Calculator />, "152", "Propuestas"],
  [<NotePencil />, "573", "Solicitudes"],
  [<MagnifierBox />, "218", "Evaluaciones"],
  [<Shield color="#1fa01c" mark="check" />, "3374", "Aprobadas"],
  [<Shield color="#f2bd10" mark="bang" />, "404", "Condicionadas"],
  [<Shield color="#c4161c" mark="cross" />, "984", "Rechazadas"],
];
const followStats: Stat[] = [
  [<PenPapers />, "5727", "Cerrando Crédito", 32],
  [<PriceTag />, "10", "Negoc. Descuento", 34],
  [<SwapBall />, "5", "Negoc. Toma", 34],
  [<RedCross />, "1", "No hay Modelo", 28],
  [<CoinStacks />, "5", "No tiene Pie", 32],
  [<CalendarIcon />, "21", "Para mas Adelante", 28],
];
const menu: [string, string][] = [
  ["home", "Inicio"], ["scroll", "Casos"], ["scroll", "Post Venta"], ["scroll", "Reportes"], ["coin", "Tesorería"],
  ["screen", "Marketing"], ["db", "Maestros"], ["key", "Administración"], ["user", "Evaluadores"], ["user", "Usuario"], ["exit", "Salir"],
];
const reasons: [string, string][] = [
  ["1000", "abogado malo"], ["1", "Baja Capacidad"], ["2", "Causas Judiciales"], ["3", "Falta Informacion"],
  ["", "Fuera de Politica"], ["", "Morosidad Conyuge"], ["5", "Morosidades e Impagos"],
];

const PagerGlyph = ({ d, bar, faded }: { d: string; bar?: number; faded?: boolean }) => (
  <svg width="18" height="18" viewBox="0 0 18 18" opacity={faded ? 0.6 : 1} fill="#5fb0e2" stroke="#2a78b4">
    <path d={d} />
    {bar !== undefined && <rect x={bar} y="1.500" width="3" height="15" />}
  </svg>
);

export default function App() {
  return (
    <Screen>
      <GlobalStyle />
      <TabStrip>
        {tabIcons.map((icon, i) => (
          <Tab key={i} $narrow={i >= 23}>{icon}</Tab>
        ))}
        <ActiveTab>
          <svg width="8" height="8" viewBox="0 0 10 10" stroke="#5f6368" strokeWidth="1.900"><path d="m.5.500 9 9M9.500.500l-9 9" /></svg>
        </ActiveTab>
        <ChromeButton $w={44} aria-label="Nueva pestaña">
          <svg width="12" height="12" viewBox="0 0 12 12" stroke="#5f6368" strokeWidth="2"><path d="M6 0v12M0 6h12" /></svg>
        </ChromeButton>
        <WindowControls>
          <ChromeButton $w={46} aria-label="Minimizar">
            <svg width="10" height="10" viewBox="0 0 10 10" stroke="#000"><path d="M0 5.500h10" /></svg>
          </ChromeButton>
          <ChromeButton $w={46} aria-label="Restaurar">
            <svg width="10" height="10" viewBox="0 0 10 10" fill="none" stroke="#000"><path d="M.5 2.500h7v7h-7zM2.500 2.500v-2h7v7h-2" /></svg>
          </ChromeButton>
          <ChromeButton $w={46} aria-label="Cerrar">
            <svg width="10" height="10" viewBox="0 0 10 10" stroke="#000" strokeWidth="1.100"><path d="m0 0 10 10M10 0 0 10" /></svg>
          </ChromeButton>
        </WindowControls>
      </TabStrip>
      <AddressRow>
        <ChromeButton $w={36} aria-label="Atrás">
          <svg width="14" height="14" viewBox="0 0 14 14" fill="none" stroke="#5a5d61" strokeWidth="1.900"><path d="M14 7H1.500M7.500 1l-6 6 6 6" /></svg>
        </ChromeButton>
        <ChromeButton $w={28} aria-label="Adelante">
          <svg width="14" height="14" viewBox="0 0 14 14" fill="none" stroke="#babcbe" strokeWidth="1.900"><path d="M0 7h12.500M6.500 1l6 6-6 6" /></svg>
        </ChromeButton>
        <ChromeButton $w={36} aria-label="Recargar">
          <svg width="15" height="15" viewBox="0 0 15 15"><path d="M12.500 4.300A6 6 0 1 0 13.300 9" fill="none" stroke="#5a5d61" strokeWidth="1.900" /><path d="M14 .5v6H8z" fill="#5a5d61" /></svg>
        </ChromeButton>
        <Omnibox>
          <svg width="16" height="16" viewBox="0 0 16 16" fill="none" stroke="#5f6368" strokeWidth="1.500"><circle cx="8" cy="8" r="6.500" /><path d="M8 7v4.500M8 4.200v1.600" strokeWidth="1.700" /></svg>
          <Insecure>No es seguro</Insecure>
          <Url><b>54.235.81.157</b>/gemmatest2/financiera.aspx?UPD,12</Url>
          <svg width="16" height="16" viewBox="0 0 16 16" fill="none" stroke="#5f6368" strokeWidth="1.400"><path d="m8 1.800 1.800 4.300 4.700.4-3.600 3.100 1.100 4.600L8 11.800l-4 2.400 1.100-4.600L1.500 6.500l4.700-.4z" /></svg>
        </Omnibox>
        <ChromeButton $w={44} aria-label="Perfil">
          <svg width="20" height="20" viewBox="0 0 20 20">
            <defs><clipPath id="face"><circle cx="10" cy="10" r="10" /></clipPath></defs>
            <g clipPath="url(#face)">
              <rect width="20" height="20" fill="#7fa6e4" /><path d="M4 20C1 12 2 2 10 1s9 6 6.500 14l-2 5z" fill="#1c1526" />
              <ellipse cx="11.500" cy="9.500" rx="4" ry="5.500" fill="#e9c3c4" /><path d="M9 20c0-7 6-7 6 0z" fill="#e9c3c4" /><path d="M2 20c1-4 4-5 7-4v4z" fill="#c22a34" />
              <path d="M8.500 8.500h2M12.500 8.500h2M10 13h3" stroke="#6b2b3a" strokeWidth=".8" />
            </g>
          </svg>
        </ChromeButton>
        <ChromeButton $w={20} aria-label="Actualizar">
          <svg width="16" height="16" viewBox="0 0 16 16"><circle cx="8" cy="8" r="8" fill="#f29900" /><path d="m8 3.500 4.500 4.800h-2.500V12h-4V8.300H3.500z" fill="#fff" /></svg>
        </ChromeButton>
      </AddressRow>

      <Body>
        <Page>
          <Sidebar $scrolled>
            <StatsPanel title="Por Estado Seguimiento" rows={leftStats} total={["5794", "Total Abiertos"]} icon={30} num={65} text={100} />
            <StatsPanel title="Exitos del Mes" rows={[]} total={["0", "Total Exitos"]} icon={31} num={51} text={86} />
            <StatsPanel title="Pendientes" rows={pending} total={["752", "Total Pendientes"]} icon={32} num={60} text={95} />
          </Sidebar>
          <Center>
            <FormArea>
              <LabelBand />
              <FormField>
                <Frame>
                  <MenuBar>
                    {menu.map(([kind, label]) => (
                      <MenuItem key={label} href="#"><MenuGlyph kind={kind} />{label}</MenuItem>
                    ))}
                  </MenuBar>
                  <FrameBody>
                    <Sidebar>
                      <StatsPanel title="Por Estado Caso" rows={caseStats} total={["5707", "Total Abiertos"]} icon={31} num={68} text={97} h={34} totalH={31} />
                      <StatsPanel title="Por Estado Seguimiento" rows={followStats} icon={31} num={66} text={95} />
                    </Sidebar>
                    <Work>
                      <Title>Trabajar con Motivo Rechazos</Title>
                      <FilterPanel>
                        <PanelHead>Filtros</PanelHead>
                        <FilterRow>
                          <label htmlFor="desc">Rechazo Descripcion</label>
                          <input id="desc" type="text" />
                        </FilterRow>
                      </FilterPanel>
                      <Tools>
                        <ToolButton aria-label="Agregar"><PlusIcon /></ToolButton>
                        <ToolButton aria-label="Exportar"><ExportIcon /></ToolButton>
                      </Tools>
                      <Grid>
                        <colgroup>
                          <col width={44} />
                          <col width={44} />
                          <col width={357} />
                          <col />
                        </colgroup>
                        <thead>
                          <tr><th /><th /><th>Rechazo Id</th><th>Rechazo Descripcion</th></tr>
                        </thead>
                        <tbody>
                          {reasons.map(([id, label]) => (
                            <tr key={label}>
                              <td><EditIcon /></td>
                              <td><DeleteIcon /></td>
                              <td>{id}</td>
                              <td><Link href="#">{label}</Link></td>
                            </tr>
                          ))}
                        </tbody>
                      </Grid>
                      <Pager>
                        <PagerGroup $off>
                          <PagerButton aria-label="Primera"><PagerGlyph faded bar={1} d="M14 1.500v15L5 9z" /></PagerButton>
                          <PagerButton aria-label="Anterior"><PagerGlyph faded d="M10 1.500v15L1 9z" /></PagerButton>
                        </PagerGroup>
                        <PagerGroup>
                          <PagerButton aria-label="Siguiente"><PagerGlyph d="M1.500 1.500v15L10.500 9z" /></PagerButton>
                          <PagerButton aria-label="Última"><PagerGlyph bar={11} d="M1.500 1.500v15L10.500 9z" /></PagerButton>
                        </PagerGroup>
                      </Pager>
                    </Work>
                  </FrameBody>
                </Frame>
                <FilePicker>
                  <input type="file" />
                  <FileButton>Seleccionar archivo</FileButton>
                  Ningún arch...leccionado
                </FilePicker>
              </FormField>
            </FormArea>
            <Actions>
              <ActionButton $w={67}>Confirmar</ActionButton>
              <ActionButton $w={60}>Cancelar</ActionButton>
            </Actions>
          </Center>
        </Page>
        <VBar>
          <Caret d="M4 1.500 8 6H0z" color="#505050" />
          <VThumb />
          <Caret d="M4 6.500 0 2h8z" color="#a3a3a3" />
        </VBar>
      </Body>
      <HBar>
        <Caret d="M1 4 5 0v8z" color="#a3a3a3" />
        <HThumb />
        <Caret d="M6 4 2 0v8z" color="#505050" />
      </HBar>

      <Taskbar>
        <TaskButton aria-label="Inicio">
          <svg width="18" height="22" viewBox="0 0 18 22" fill="#fff"><path d="M1 4.500 8 3.500v7H1zM9 3.300 17 2v8.500H9zM1 11.500h7v7l-7-1zM9 11.500h8V20l-8-1.300z" /></svg>
        </TaskButton>
        <TaskButton aria-label="Buscar">
          <svg width="18" height="22" viewBox="0 0 18 22" fill="none" stroke="#fff" strokeWidth="1.300"><ellipse cx="11.500" cy="7" rx="5" ry="5.800" /><path d="m8 11.500-6.500 9" /></svg>
        </TaskButton>
        <TaskButton aria-label="Vista de tareas">
          <svg width="18" height="22" viewBox="0 0 18 22" fill="none" stroke="#fff" strokeWidth="1.200"><path d="M2 6.500h8.500v9H2zM1.500 1.500v2.500h9.500v-2.500M1.500 20.500v-2.500h9.500v2.500M14.500 1.500v5M14.500 11v9.500" /><path d="M13 7h3v4h-3z" fill="#fff" stroke="none" /></svg>
        </TaskButton>
        <Apps>
          {taskIcons.map((t) => (
            <TaskButton key={t.name} aria-label={t.name} $open={t.open} $active={t.active}>{t.icon}</TaskButton>
          ))}
        </Apps>
        <Tray>
          <TrayIcon $w={46} aria-label="Contactos">
            <svg width="16" height="16" viewBox="0 0 16 16" fill="none" stroke="#fff" strokeWidth="1.200"><circle cx="5" cy="8.500" r="2.300" /><path d="M1 15c0-5 8-5 8 0" /><circle cx="10.500" cy="3.500" r="2.500" /><path d="M9 8c2-2 6-1 6 3" /></svg>
          </TrayIcon>
          <TrayIcon $w={26} aria-label="Más iconos">
            <svg width="12" height="8" viewBox="0 0 12 8" fill="none" stroke="#fff" strokeWidth="1.200"><path d="m.5 7 5.500-5.500L11.500 7" /></svg>
          </TrayIcon>
          <TrayIcon $w={24} aria-label="Red">
            <svg width="16" height="14" viewBox="0 0 16 14" fill="none" stroke="#fff"><path d="M6.500 1.500h9v8h-11V5M9.500 9.500v3M6 12.500h7M.500 1.500h4v3h-4zM2.500 4.500v7" /></svg>
          </TrayIcon>
          <TrayIcon $w={24} aria-label="Nube"><OneDrive color="#fff" /></TrayIcon>
          <TrayIcon $w={24} aria-label="OneDrive"><OneDrive color="#1277cf" badge /></TrayIcon>
          <TrayIcon $w={24} aria-label="Batería">
            <svg width="16" height="14" viewBox="0 0 16 14" fill="none" stroke="#fff"><path d="M5 4.500h9.500v6h-9.500M15.500 6v3M1 3.500h4v2l-2 1.500-2-1.500zM2 1v2M4 1v2M3 7v5.500h4" /><path d="M6 6h7.500v3.500H6z" fill="#fff" stroke="none" /></svg>
          </TrayIcon>
          <TrayIcon $w={24} aria-label="Volumen">
            <svg width="16" height="14" viewBox="0 0 16 14" fill="none" stroke="#fff"><path d="M1.500 5v4h2.500l3.500 3.500v-11L4 5zM10.500 5l4 4M14.500 5l-4 4" /></svg>
          </TrayIcon>
          <TrayIcon $w={34} aria-label="Idioma">ESP</TrayIcon>
          <Clock>10:53<br />13-12-2018</Clock>
          <Notices aria-label="Notificaciones">
            <svg width="16" height="16" viewBox="0 0 16 16"><path d="M0 1h16v11H9l-3.500 3.500V12H0z" fill="#fff" /><path d="M2.500 3.500h11M2.500 6h11M2.500 8.500h8" stroke="#1a1f2b" /></svg>
            <Count>4</Count>
          </Notices>
        </Tray>
      </Taskbar>

      <RedBox />
      <Arrow width="24" height="380" viewBox="0 0 24 380">
        <path d="M14 3h3.200L12 362H8.500z" fill="#b80008" />
        <path d="M3.500 359 18 359.500 10 374z" fill="#c00008" />
      </Arrow>
      <BigNote>esta es la<br />imagen que se<br />subió</BigNote>
    </Screen>
  );
}
